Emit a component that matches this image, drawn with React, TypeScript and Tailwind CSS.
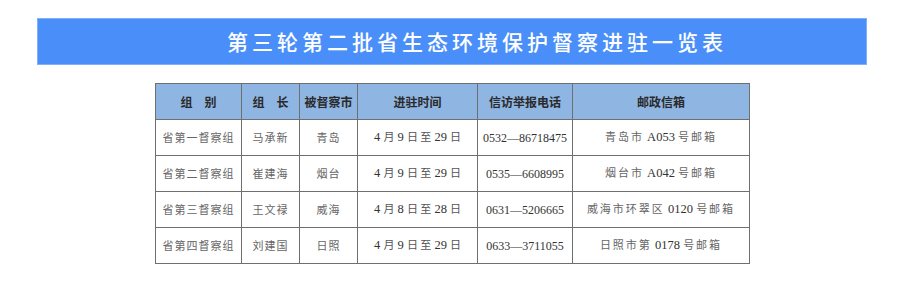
import React from 'react';

type Row = {
  group: string
  leader: string
  city: string
  date: string[]
  phone: string
  mail: string[]
}

const rows: Row[] = [
  { group: '省第一督察组', leader: '马承新', city: '青岛', date: ['4', '9', '29'], phone: '0532—86718475', mail: ['青岛市', 'A053'] },
  { group: '省第二督察组', leader: '崔建海', city: '烟台', date: ['4', '9', '29'], phone: '0535—6608995', mail: ['烟台市', 'A042'] },
  { group: '省第三督察组', leader: '王文禄', city: '威海', date: ['4', '8', '28'], phone: '0631—5206665', mail: ['威海市环翠区', '0120'] },
  { group: '省第四督察组', leader: '刘建国', city: '日照', date: ['4', '9', '29'], phone: '0633—3711055', mail: ['日照市第', '0178'] },
];

const serif = "font-['Liberation_Serif','Noto_Sans_CJK_SC',serif]";
const cjk = "font-['Noto_Sans_CJK_SC',sans-serif]";
const cell = 'border border-[#6f6f6f] p-0 whitespace-nowrap';

export default function App() {
  return (
    <main className="w-[900px] h-[287px] bg-white pt-[18px]">
      <div className="ml-[37px] w-[830px] h-[47px] bg-[#4a8ff9] border border-[#7fb0fb] flex items-center justify-center pl-[50px]">
        <h1 className={`${cjk} text-white text-[21px] font-medium tracking-[4px] leading-none`}>
          第三轮第二批省生态环境保护督察进驻一览表
        </h1>
      </div>

      <table className="ml-[155px] mt-[18px] w-[594px] table-fixed border-collapse text-center">
        <colgroup>
          <col className="w-[86px]" />
          <col className="w-[58px]" />
          <col className="w-[58px]" />
          <col className="w-[120px]" />
          <col className="w-[95px]" />
          <col className="w-[177px]" />
        </colgroup>
        <thead>
          <tr className="h-[36px] bg-[#8fb5e3]">
            {['组　别', '组　长', '被督察市', '进驻时间', '信访举报电话', '邮政信箱'].map((h) => (
              <th key={h} className={`${cjk} ${cell} font-bold text-[#2a2a2a] text-[12px]`}>
                {h}
              </th>
            ))}
          </tr>
        </thead>
        <tbody>
          {rows.map((r) => (
            <tr key={r.group} className="h-[36px]">
              <td className={`${cjk} ${cell} text-[#666] text-[11px] tracking-[1px]`}>{r.group}</td>
              <td className={`${cjk} ${cell} text-[#666] text-[11px] tracking-[1px]`}>{r.leader}</td>
              <td className={`${cjk} ${cell} text-[#666] text-[11px] tracking-[1px]`}>{r.city}</td>
              <td className={`${serif} ${cell} text-[#333] text-[12.5px] pl-[16px] text-left`}>
                {r.date[0]} <span className={`${cjk} text-[11px] text-[#555]`}>月</span> {r.date[1]}{' '}
                <span className={`${cjk} text-[11px] text-[#555]`}>日 至</span> {r.date[2]}{' '}
                <span className={`${cjk} text-[11px] text-[#555]`}>日</span>
              </td>
              <td className={`${serif} ${cell} text-[#333] text-[12px]`}>{r.phone}</td>
              <td className={`${serif} ${cell} text-[#333] text-[12.5px]`}>
                <span className={`${cjk} text-[11px] text-[#666] tracking-[2px]`}>{r.mail[0]}</span> {r.mail[1]}{' '}
                <span className={`${cjk} text-[11px] text-[#666] tracking-[2px]`}>号邮箱</span>
              </td>
            </tr>
          ))}
        </tbody>
      </table>
    </main>
  );
}
